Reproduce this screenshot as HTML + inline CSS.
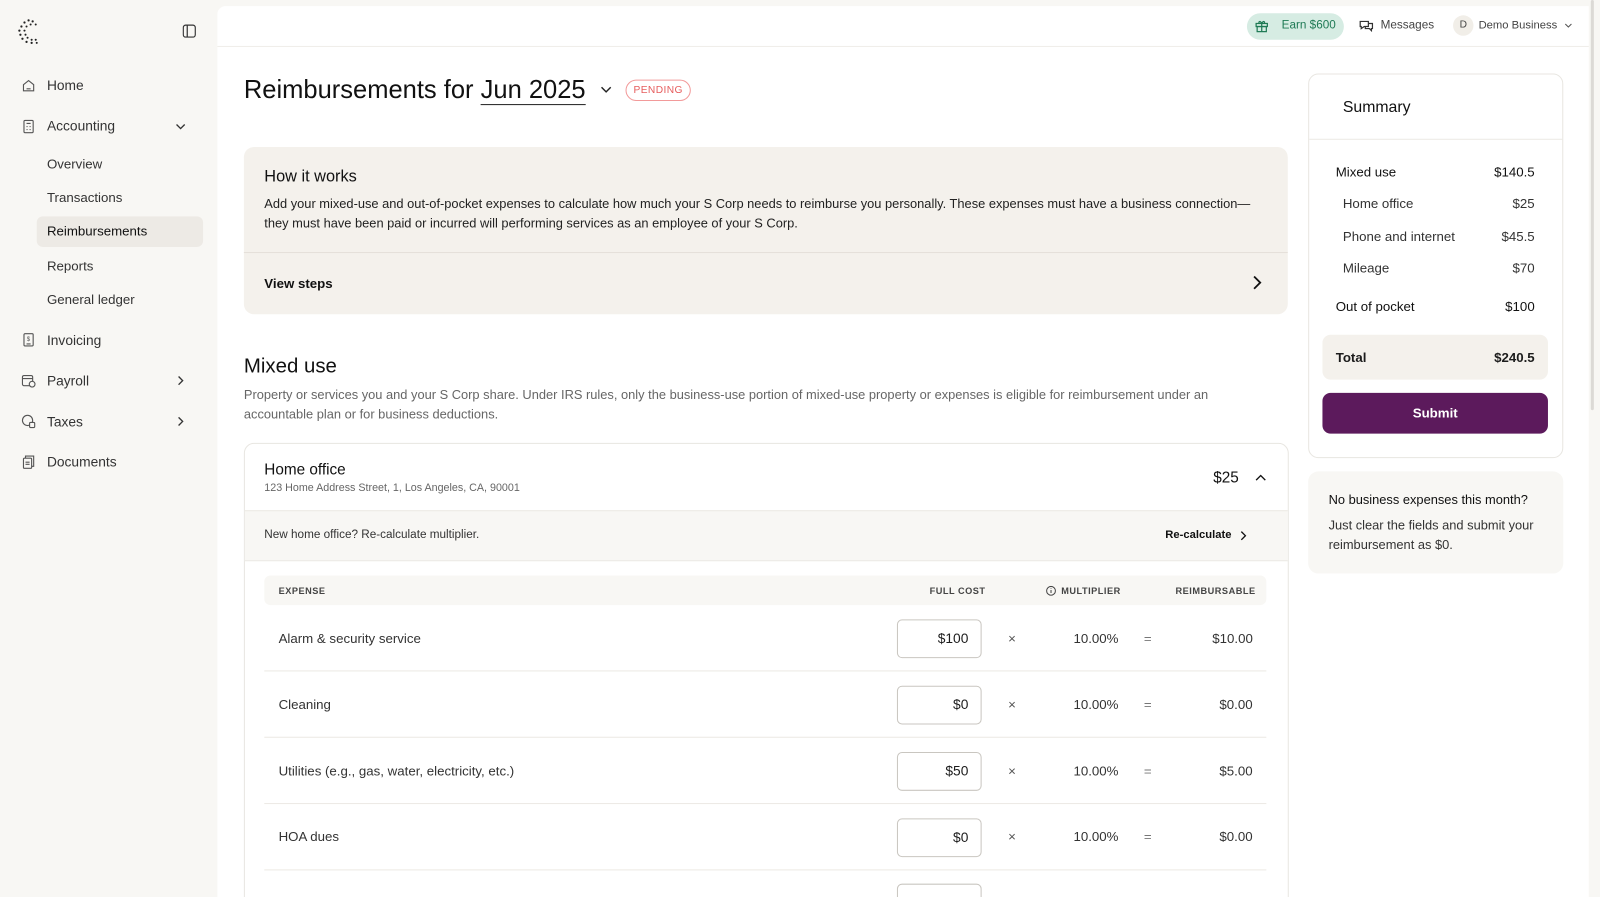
<!DOCTYPE html>
<html><head><meta charset="utf-8"><style>
*{box-sizing:border-box;margin:0;padding:0}
html,body{width:1600px;height:897px;overflow:hidden;background:#f8f7f4}
#w{position:absolute;left:0;top:0;width:1568px;height:879px;transform:scale(1.020408);transform-origin:0 0;font-family:"Liberation Sans",sans-serif;color:#1c1c1c;overflow:hidden}
.a{position:absolute}
.nav{position:absolute;left:46px;font-size:13.5px;color:#333}
.ic{position:absolute;left:21px;width:14px;height:14px}
.main{position:absolute;left:213px;top:6px;width:1344px;height:900px;background:#fff;border-radius:8px 0 0 0}
.sm{font-size:13px;color:#333}
.th{position:absolute;top:574px;font-size:9px;letter-spacing:.5px;color:#444;font-weight:bold}
.inp{position:absolute;left:879px;width:83px;height:38px;border:1px solid #c9c6c0;border-radius:5px;text-align:right;padding-right:12px;line-height:36px;font-size:13.5px}
.row{position:absolute;left:259px;width:982px;height:65px;border-bottom:1px solid #ece9e4;font-size:13.5px}
</style></head><body><div id="w">
<svg class="a" style="left:16px;top:17px" width="24" height="28" viewBox="0 0 24 28"><g fill="#222"><circle cx="12" cy="3" r="1.1"/><circle cx="16" cy="4" r="1.1"/><circle cx="8" cy="5" r="1.1"/><circle cx="14" cy="7" r="1"/><circle cx="19" cy="7" r="1"/><circle cx="5" cy="9" r="1.1"/><circle cx="10" cy="9" r="1"/><circle cx="3" cy="13" r="1.1"/><circle cx="8" cy="13" r="1"/><circle cx="4" cy="17" r="1.1"/><circle cx="9" cy="17" r="1"/><circle cx="6" cy="21" r="1.1"/><circle cx="11" cy="20" r="1"/><circle cx="10" cy="24" r="1.1"/><circle cx="15" cy="22" r="1"/><circle cx="15" cy="25" r="1.1"/><circle cx="19" cy="22" r="1"/><circle cx="20" cy="25" r="1"/></g></svg>
<svg class="a" style="left:179px;top:24px" width="13" height="13" viewBox="0 0 13 13" fill="none" stroke="#333" stroke-width="1.2"><rect x=".6" y=".6" width="11.8" height="11.8" rx="2.5"/><line x1="4.5" y1="1" x2="4.5" y2="12"/></svg>

<svg class="ic" style="top:77px" viewBox="0 0 14 14" fill="none" stroke="#555" stroke-width="1.1"><path d="M2 6L7 2l5 4v6H2z"/><path d="M5 10h4"/></svg>
<div class="nav" style="top:76px">Home</div>
<svg class="ic" style="top:117px" viewBox="0 0 14 14" fill="none" stroke="#555" stroke-width="1.1"><rect x="2.5" y="1" width="9" height="12" rx="1"/><path d="M5 4h4M5 7h1M8 7h1M5 10h1M8 10h1"/></svg>
<div class="nav" style="top:116px">Accounting</div>
<svg class="a" style="left:172px;top:120px" width="10" height="8" viewBox="0 0 10 8" fill="none" stroke="#333" stroke-width="1.3"><path d="M1 2l4 4 4-4"/></svg>
<div class="nav" style="top:153px;font-size:13px">Overview</div>
<div class="nav" style="top:186px;font-size:13px">Transactions</div>
<div class="a" style="left:36px;top:212px;width:163px;height:30px;background:#edeae5;border-radius:6px"></div>
<div class="nav" style="top:219px;font-size:13px;color:#111">Reimbursements</div>
<div class="nav" style="top:253px;font-size:13px">Reports</div>
<div class="nav" style="top:286px;font-size:13px">General ledger</div>
<svg class="ic" style="top:326px" viewBox="0 0 14 14" fill="none" stroke="#555" stroke-width="1.1"><rect x="2.5" y="1" width="9" height="12" rx="1"/><path d="M5 11h4"/><text x="5.2" y="8" font-size="6" fill="#555" stroke="none">$</text></svg>
<div class="nav" style="top:326px">Invoicing</div>
<svg class="ic" style="top:366px" viewBox="0 0 14 14" fill="none" stroke="#555" stroke-width="1.1"><rect x="1" y="2" width="10" height="10" rx="1.5"/><path d="M1 5h10"/><circle cx="10.5" cy="10.5" r="2.8" fill="#f8f7f4"/></svg>
<div class="nav" style="top:366px">Payroll</div>
<svg class="a" style="left:173px;top:368px" width="8" height="10" viewBox="0 0 8 10" fill="none" stroke="#333" stroke-width="1.3"><path d="M2 1l4 4-4 4"/></svg>
<svg class="ic" style="top:406px" viewBox="0 0 14 14" fill="none" stroke="#555" stroke-width="1.1"><circle cx="6" cy="6" r="5"/><rect x="8" y="8" width="5" height="5" rx="1" fill="#f8f7f4"/></svg>
<div class="nav" style="top:406px">Taxes</div>
<svg class="a" style="left:173px;top:408px" width="8" height="10" viewBox="0 0 8 10" fill="none" stroke="#333" stroke-width="1.3"><path d="M2 1l4 4-4 4"/></svg>
<svg class="ic" style="top:446px" viewBox="0 0 14 14" fill="none" stroke="#555" stroke-width="1.1"><rect x="2" y="3" width="8" height="10" rx="1"/><path d="M4 3V1h8v10h-2M4 7h4M4 9h4"/></svg>
<div class="nav" style="top:445px">Documents</div>

<div class="main"></div>
<div class="a" style="left:213px;top:45px;width:1344px;height:1px;background:#efede9"></div>
<div class="a" style="left:1559px;top:0;width:9px;height:897px;background:#f8f7f4"></div>
<div class="a" style="left:1559px;top:0;width:3px;height:402px;background:#dcdad6;border-radius:2px"></div>

<div class="a" style="left:1222px;top:13px;width:95px;height:26px;background:#d6ece3;border-radius:13px"></div>
<svg class="a" style="left:1230px;top:19px" width="13" height="13" viewBox="0 0 13 13" fill="none" stroke="#1f7a55" stroke-width="1.2"><rect x="1" y="4" width="11" height="3"/><rect x="2" y="7" width="9" height="5"/><path d="M6.5 4v8M6.5 4C5 1 3 2 4 4M6.5 4C8 1 10 2 9 4"/></svg>
<div class="a" style="left:1256px;top:19px;font-size:11.5px;color:#1f7a55">Earn $600</div>
<svg class="a" style="left:1332px;top:19px" width="14" height="13" viewBox="0 0 14 13" fill="none" stroke="#333" stroke-width="1.2"><path d="M1 2h8v5H5L2 9V7H1z"/><path d="M9 4h4v5h-1v2l-2-2H6V7"/></svg>
<div class="a" style="left:1353px;top:19px;font-size:11.5px;color:#444">Messages</div>
<div class="a" style="left:1424px;top:15px;width:20px;height:20px;border-radius:50%;background:#f1eee8;font-size:10px;text-align:center;line-height:20px;color:#444">D</div>
<div class="a" style="left:1449px;top:19px;font-size:11px;color:#444">Demo Business</div>
<svg class="a" style="left:1533px;top:22px" width="8" height="6" viewBox="0 0 8 6" fill="none" stroke="#555" stroke-width="1"><path d="M1 1.5l3 3 3-3"/></svg>

<div class="a" style="left:239px;top:74px;font-size:25px;color:#111">Reimbursements for <span style="border-bottom:1.5px solid #222">Jun 2025</span></div>
<svg class="a" style="left:588px;top:84px" width="12" height="8" viewBox="0 0 12 8" fill="none" stroke="#222" stroke-width="1.4"><path d="M1.5 1.5l4.5 4.5 4.5-4.5"/></svg>
<div class="a" style="left:613px;top:78px;width:64px;height:21px;border:1px solid #f29a9a;border-radius:11px;font-size:10px;color:#e65c5c;text-align:center;line-height:19px;letter-spacing:.4px">PENDING</div>

<div class="a" style="left:239px;top:144px;width:1023px;height:164px;background:#f4f1ec;border-radius:10px"></div>
<div class="a" style="left:239px;top:247px;width:1023px;height:1px;background:#e4e0d9"></div>
<div class="a" style="left:259px;top:165px;font-size:16px;color:#111">How it works</div>
<div class="a" style="left:259px;top:191px;width:980px;font-size:12.6px;line-height:18.5px;color:#222">Add your mixed-use and out-of-pocket expenses to calculate how much your S Corp needs to reimburse you personally. These expenses must have a business connection—they must have been paid or incurred will performing services as an employee of your S Corp.</div>
<div class="a" style="left:259px;top:270px;font-size:13px;font-weight:bold;color:#111">View steps</div>
<svg class="a" style="left:1227px;top:269px" width="10" height="16" viewBox="0 0 10 16" fill="none" stroke="#111" stroke-width="1.8"><path d="M2 2l6 6-6 6"/></svg>

<div class="a" style="left:239px;top:348px;font-size:20px;color:#111">Mixed use</div>
<div class="a" style="left:239px;top:378px;width:990px;font-size:12.6px;line-height:19px;color:#666">Property or services you and your S Corp share. Under IRS rules, only the business-use portion of mixed-use property or expenses is eligible for reimbursement under an accountable plan or for business deductions.</div>

<div class="a" style="left:239px;top:434px;width:1024px;height:480px;border:1px solid #e8e6e1;border-radius:10px"></div>
<div class="a" style="left:259px;top:452px;font-size:15px;color:#111">Home office</div>
<div class="a" style="left:259px;top:472px;font-size:10.5px;color:#666">123 Home Address Street, 1, Los Angeles, CA, 90001</div>
<div class="a" style="left:1189px;top:460px;font-size:15px;color:#111">$25</div>
<svg class="a" style="left:1230px;top:464px" width="11" height="8" viewBox="0 0 11 8" fill="none" stroke="#111" stroke-width="1.3"><path d="M1 6.5l4.5-4.5 4.5 4.5"/></svg>
<div class="a" style="left:240px;top:500px;width:1022px;height:50px;background:#f8f7f4;border-top:1px solid #eceae5;border-bottom:1px solid #eceae5"></div>
<div class="a" style="left:259px;top:518px;font-size:11.5px;color:#333">New home office? Re-calculate multiplier.</div>
<div class="a" style="left:1142px;top:518px;font-size:11px;font-weight:bold;color:#111">Re-calculate</div>
<svg class="a" style="left:1215px;top:520px" width="7" height="10" viewBox="0 0 7 10" fill="none" stroke="#111" stroke-width="1.3"><path d="M1.5 1l4 4-4 4"/></svg>

<div class="a" style="left:259px;top:564px;width:982px;height:29px;background:#f8f7f4;border-radius:6px"></div>
<div class="th" style="left:273px">EXPENSE</div>
<div class="th" style="left:911px">FULL COST</div>
<svg class="a" style="left:1025px;top:574px" width="10" height="10" viewBox="0 0 10 10" fill="none" stroke="#444" stroke-width="1"><circle cx="5" cy="5" r="4.3"/><path d="M5 4.2v3M5 2.6v.6"/></svg>
<div class="th" style="left:1040px">MULTIPLIER</div>
<div class="th" style="left:1152px">REIMBURSABLE</div>

<div class="row" style="top:593px"></div><div class="row" style="top:658px"></div><div class="row" style="top:723px"></div><div class="row" style="top:788px"></div>

<div class="a sm" style="left:273px;top:618px">Alarm &amp; security service</div>
<div class="inp" style="top:607px">$100</div>
<div class="a sm" style="left:988px;top:618px;color:#555">×</div>
<div class="a sm" style="left:1052px;top:618px">10.00%</div>
<div class="a sm" style="left:1121px;top:618px;color:#777">=</div>
<div class="a sm" style="left:1188px;top:618px">$10.00</div>

<div class="a sm" style="left:273px;top:683px">Cleaning</div>
<div class="inp" style="top:672px">$0</div>
<div class="a sm" style="left:988px;top:683px;color:#555">×</div>
<div class="a sm" style="left:1052px;top:683px">10.00%</div>
<div class="a sm" style="left:1121px;top:683px;color:#777">=</div>
<div class="a sm" style="left:1195px;top:683px">$0.00</div>

<div class="a sm" style="left:273px;top:748px">Utilities (e.g., gas, water, electricity, etc.)</div>
<div class="inp" style="top:737px">$50</div>
<div class="a sm" style="left:988px;top:748px;color:#555">×</div>
<div class="a sm" style="left:1052px;top:748px">10.00%</div>
<div class="a sm" style="left:1121px;top:748px;color:#777">=</div>
<div class="a sm" style="left:1195px;top:748px">$5.00</div>

<div class="a sm" style="left:273px;top:812px">HOA dues</div>
<div class="inp" style="top:802px">$0</div>
<div class="a sm" style="left:988px;top:812px;color:#555">×</div>
<div class="a sm" style="left:1052px;top:812px">10.00%</div>
<div class="a sm" style="left:1121px;top:812px;color:#777">=</div>
<div class="a sm" style="left:1195px;top:812px">$0.00</div>

<div class="inp" style="top:866px"></div>

<div class="a" style="left:1282px;top:72px;width:250px;height:377px;border:1px solid #e8e6e1;border-radius:10px"></div>
<div class="a" style="left:1283px;top:136px;width:248px;height:1px;background:#eceae5"></div>
<div class="a" style="left:1316px;top:97px;font-size:15.5px;color:#111">Summary</div>
<div class="a sm" style="left:1309px;top:161px;color:#111">Mixed use</div><div class="a sm" style="right:64px;top:161px;color:#111">$140.5</div>
<div class="a sm" style="left:1316px;top:192px">Home office</div><div class="a sm" style="right:64px;top:192px">$25</div>
<div class="a sm" style="left:1316px;top:224px">Phone and internet</div><div class="a sm" style="right:64px;top:224px">$45.5</div>
<div class="a sm" style="left:1316px;top:255px">Mileage</div><div class="a sm" style="right:64px;top:255px">$70</div>
<div class="a sm" style="left:1309px;top:293px;color:#111">Out of pocket</div><div class="a sm" style="right:64px;top:293px;color:#111">$100</div>
<div class="a" style="left:1296px;top:328px;width:221px;height:44px;background:#f4f1ec;border-radius:8px"></div>
<div class="a" style="left:1309px;top:343px;font-size:13px;font-weight:bold">Total</div>
<div class="a" style="right:64px;top:343px;font-size:13px;font-weight:bold">$240.5</div>
<div class="a" style="left:1296px;top:385px;width:221px;height:40px;background:#5c1a5c;border-radius:8px;color:#fff;font-size:13px;font-weight:bold;text-align:center;line-height:40px">Submit</div>

<div class="a" style="left:1282px;top:462px;width:250px;height:100px;background:#f8f7f4;border-radius:10px"></div>
<div class="a" style="left:1302px;top:483px;font-size:12.6px;color:#111">No business expenses this month?</div>
<div class="a" style="left:1302px;top:506px;width:220px;font-size:12.6px;line-height:19px;color:#333">Just clear the fields and submit your reimbursement as $0.</div>
</div></body></html>
